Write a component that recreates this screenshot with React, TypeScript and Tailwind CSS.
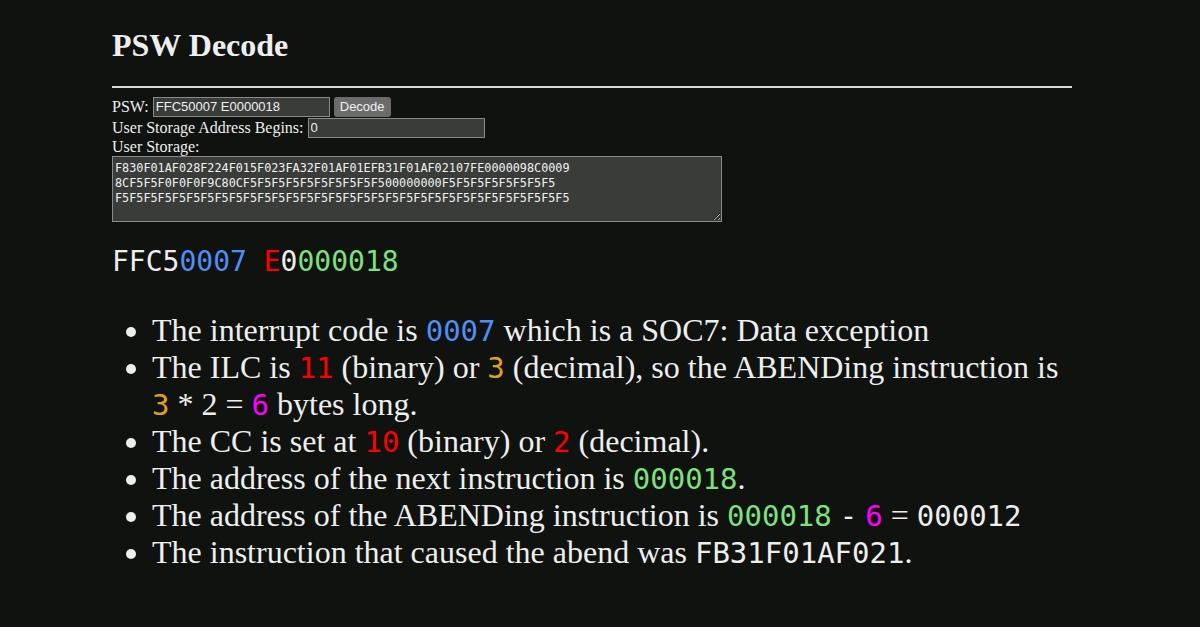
export default function App() {
  const mono = "font-['DejaVu_Sans_Mono',monospace]"
  const code = `text-[29px] leading-none ${mono}`
  return (
    <div className="min-h-[627px] bg-[#101210] text-[#eeeeee] font-['Liberation_Serif',serif]">
      <div className="ml-[112px] w-[960px] pt-[27px]">
        <h1 className="text-[32px] font-bold leading-[37px]">PSW Decode</h1>
        <hr className="mt-[22px] border-0 h-[2px] bg-[#d8d8d8]" />
        <div className="mt-[8px] text-[16px] leading-[20px]">
          <div className="flex items-center h-[21px]">
            <span>PSW:</span>
            <input
              defaultValue="FFC50007 E0000018"
              className="ml-[4px] w-[177px] h-[20px] px-[2px] bg-[#3a3c3a] border border-[#8a8a8a] text-[13px] text-[#f0f0f0] font-['Liberation_Sans',sans-serif] outline-none"
            />
            <button className="ml-[4px] h-[20px] px-[6px] rounded-[3px] bg-[#6a6b6a] text-[13px] text-[#f0f0f0] font-['Liberation_Sans',sans-serif]">
              Decode
            </button>
          </div>
          <div className="flex items-center h-[21px]">
            <span>User Storage Address Begins:</span>
            <input
              defaultValue="0"
              className="ml-[4px] w-[177px] h-[20px] px-[2px] bg-[#3a3c3a] border border-[#8a8a8a] text-[13px] text-[#f0f0f0] font-['Liberation_Sans',sans-serif] outline-none"
            />
          </div>
          <div className="leading-[18px]">User Storage:</div>
          <textarea
            defaultValue={
              "F830F01AF028F224F015F023FA32F01AF01EFB31F01AF02107FE0000098C0009\n8CF5F5F0F0F0F9C80CF5F5F5F5F5F5F5F5F5F500000000F5F5F5F5F5F5F5F5\nF5F5F5F5F5F5F5F5F5F5F5F5F5F5F5F5F5F5F5F5F5F5F5F5F5F5F5F5F5F5F5F5"
            }
            className={`block w-[610px] h-[66px] px-[2px] pt-[4px] pb-[2px] bg-[#3a3c3a] border border-[#8a8a8a] text-[11.8px] leading-[15px] text-[#f0f0f0] ${mono} outline-none resize`}
          />
        </div>
        <div className={`mt-[23px] text-[28px] leading-[34px] ${mono}`}>
          <span>FFC5</span>
          <span className="text-[#4f8ef7]">0007</span>{" "}
          <span className="text-[#ff0000]">E</span>
          <span>0</span>
          <span className="text-[#7ee07e]">000018</span>
        </div>
        <ul className="mt-[33px] pl-[40px] list-disc text-[32px] leading-[37px]">
          <li>
            The interrupt code is <span className={`${code} text-[#4f8ef7]`}>0007</span> which is a SOC7: Data exception
          </li>
          <li>
            The ILC is <span className={`${code} text-[#ff0000]`}>11</span> (binary) or{" "}
            <span className={`${code} text-[#e0a020]`}>3</span> (decimal), so the ABENDing instruction is{" "}
            <span className={`${code} text-[#e0a020]`}>3</span> * 2 ={" "}
            <span className={`${code} text-[#ff00ff]`}>6</span> bytes long.
          </li>
          <li>
            The CC is set at <span className={`${code} text-[#ff0000]`}>10</span> (binary) or{" "}
            <span className={`${code} text-[#ff0000]`}>2</span> (decimal).
          </li>
          <li>
            The address of the next instruction is <span className={`${code} text-[#7ee07e]`}>000018</span>.
          </li>
          <li>
            The address of the ABENDing instruction is{" "}
            <span className={`${code} text-[#7ee07e]`}>000018</span>{" "}
            <span className={code}>-</span>{" "}
            <span className={`${code} text-[#ff00ff]`}>6</span> ={" "}
            <span className={code}>000012</span>
          </li>
          <li>
            The instruction that caused the abend was <span className={code}>FB31F01AF021</span>.
          </li>
        </ul>
      </div>
    </div>
  )
}
